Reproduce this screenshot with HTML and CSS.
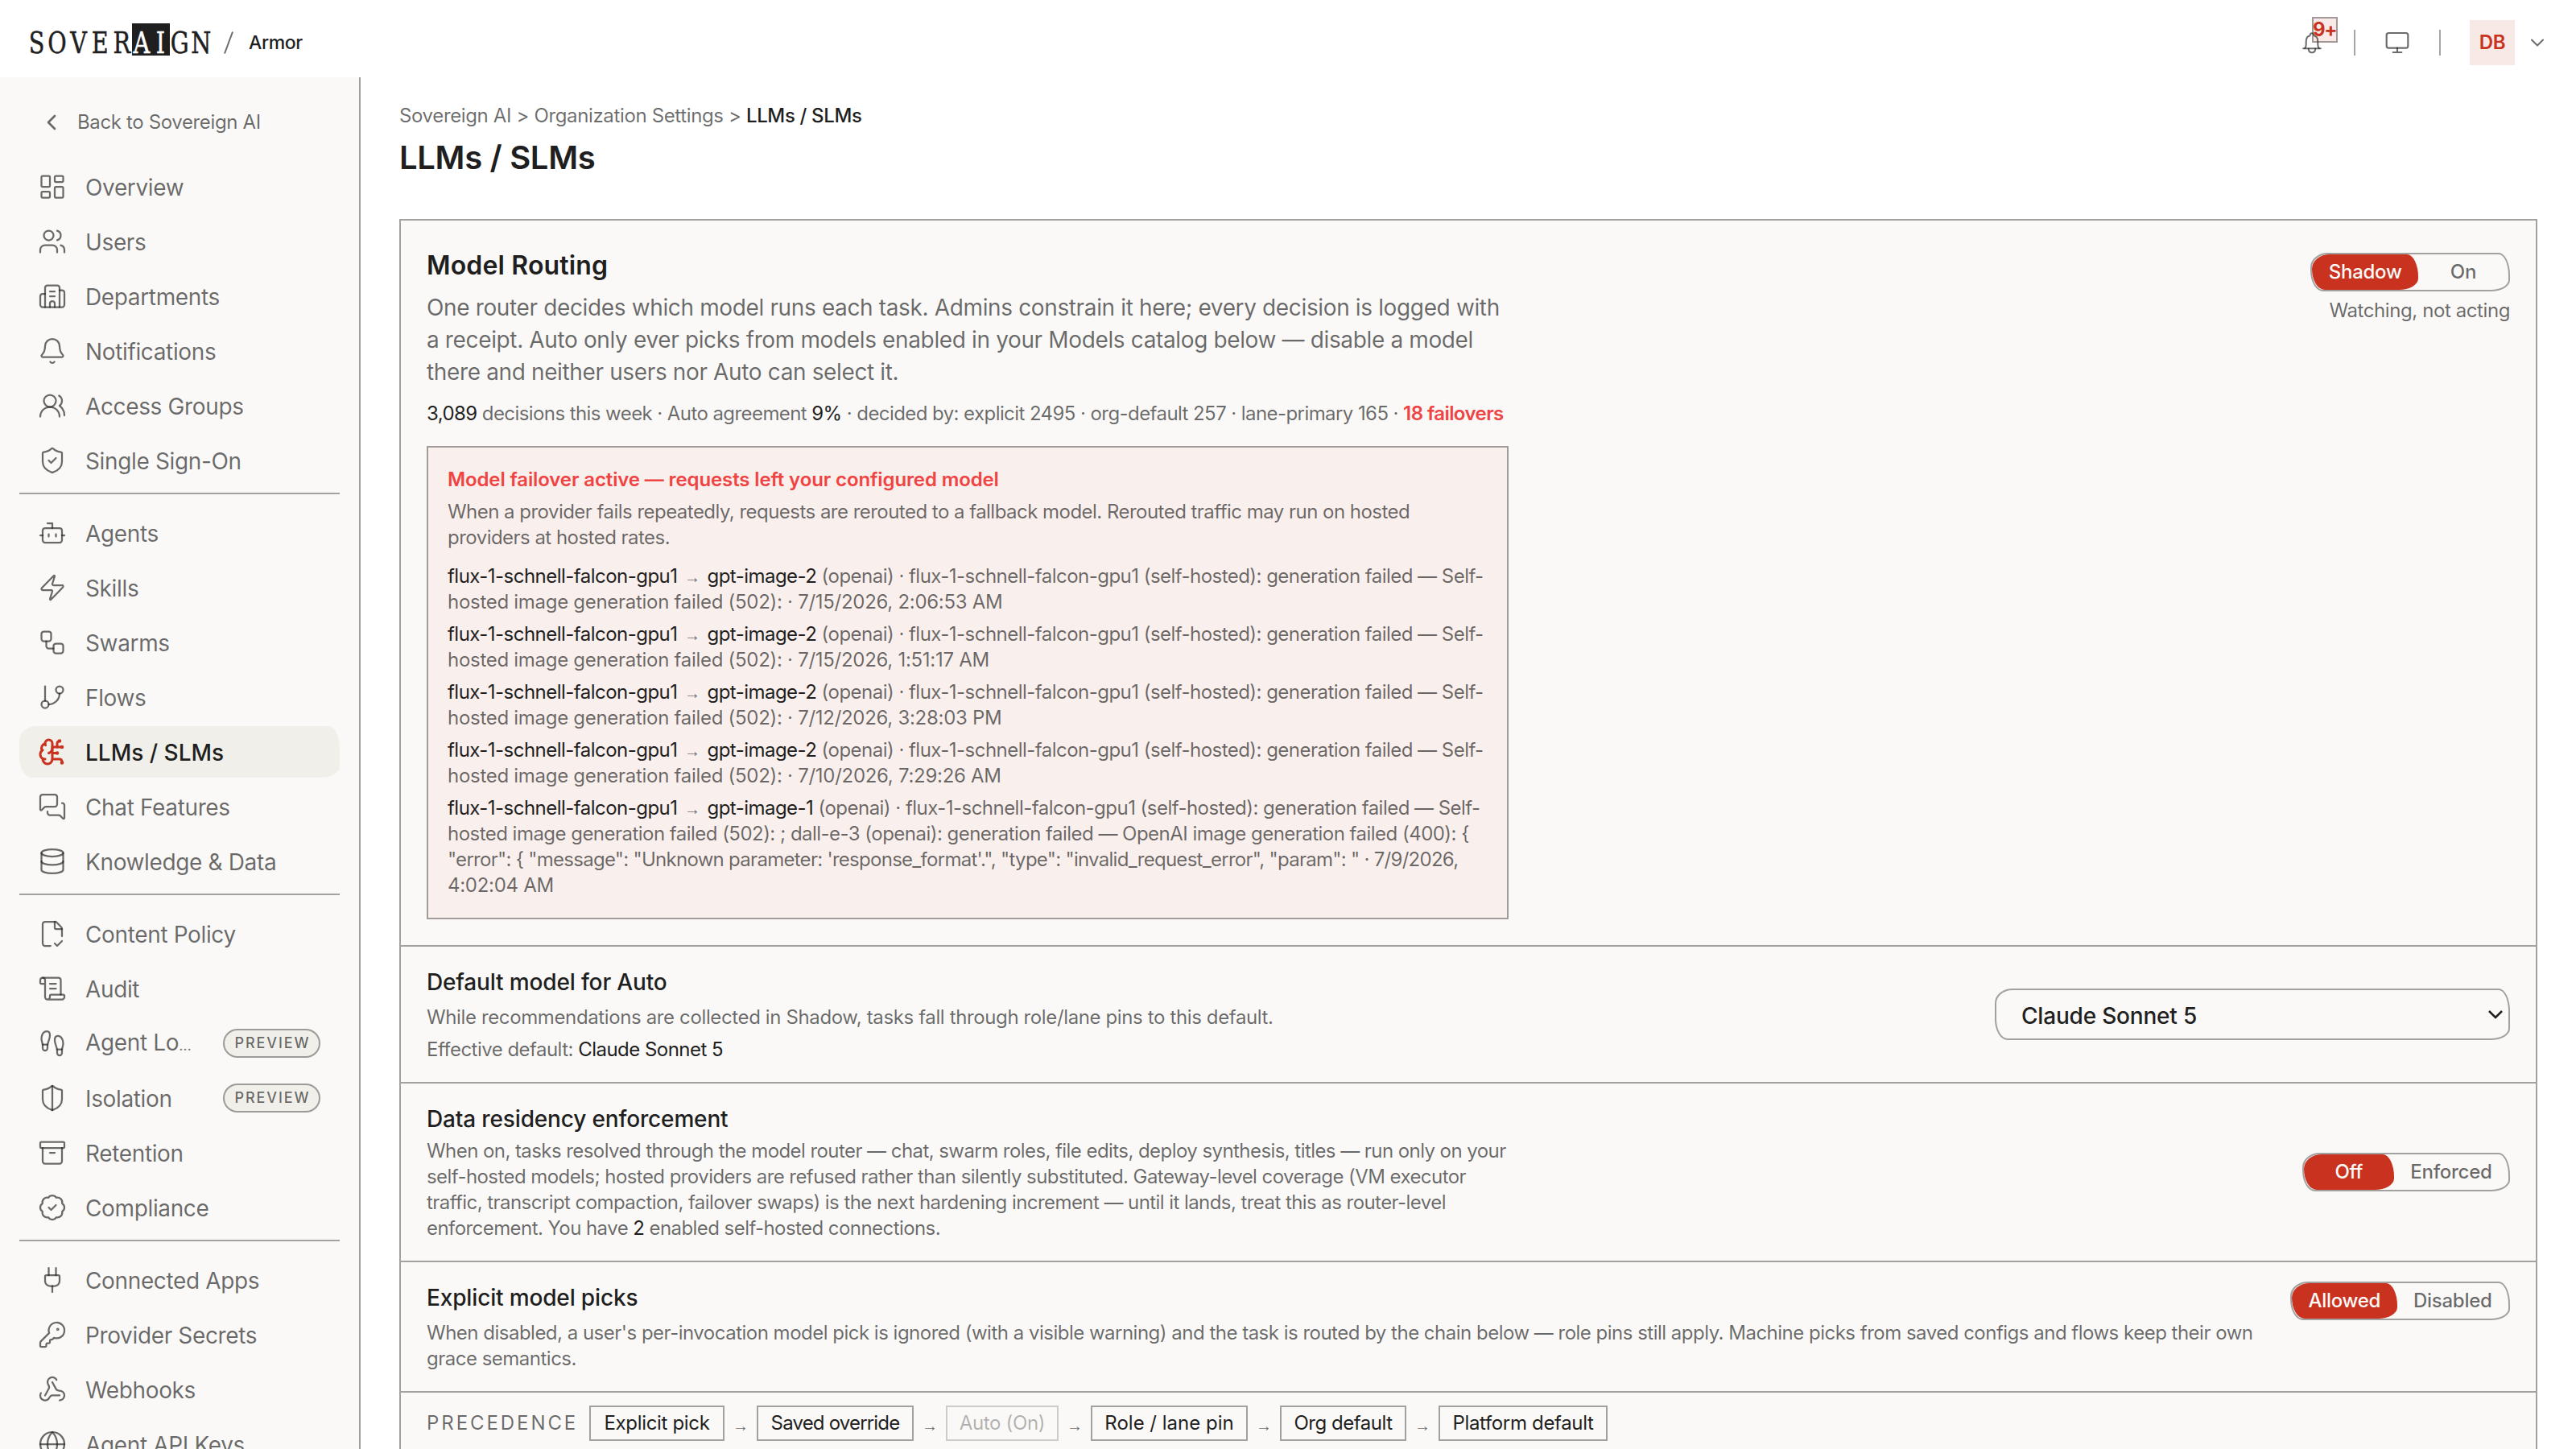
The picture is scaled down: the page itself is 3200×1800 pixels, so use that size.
FILE: index.html
```html
<!DOCTYPE html>
<html lang="en">
<head>
    <meta charset="UTF-8">
    <meta name="viewport" content="width=device-width, initial-scale=1.0">
    <title>LLMs / SLMs</title>
    <link rel="stylesheet" href="styles.css">
</head>
<body>
    <header class="topbar">
        <svg class="logo" viewBox="0 -8 232 60" role="img" aria-label="SOVERAIGN">
            <rect class="logo-box" x="132" y="2" width="47" height="40"/>
            <g transform="scale(.86 1)">
                <text class="logo-text" y="39" x="15.9 45.4 76.2 107.300 138.700">SOVER</text>
                <text class="logo-text light" y="39" x="167.400 194.800">AI</text>
                <text class="logo-text" y="39" x="222.400 253.100">GN</text>
            </g>
        </svg>
        <svg class="slash" viewBox="0 0 12 28"><path d="M1 27.5 11 .5"/></svg>
        <span class="product">Armor</span>
        <div class="topbar-right">
            <div class="bell">
                <svg class="icon" viewBox="0 0 32 32"><path d="M5.2 23.2h21.600"/><path d="M7 23c1.200-1 1.700-2.200 1.700-4.200v-4.600c0-3.600 1.900-6.200 4.800-7 .2-1.900 1-2.900 2.500-2.900s2.300 1 2.500 2.900c2.900.8 4.800 3.400 4.800 7v4.600c0 2 .5 3.200 1.700 4.200"/><path d="M11.800 23.500c0 2.900 1.700 4.800 4.200 4.800s4.200-1.900 4.200-4.800"/></svg>
                <span class="bell-count">9+</span>
            </div>
            <span class="separator"></span>
            <svg class="icon monitor" viewBox="0 0 24 24"><rect width="20" height="14" x="2" y="3" rx="2"/><path d="M8 21h8M12 17v4"/></svg>
            <span class="separator"></span>
            <div class="avatar">DB</div>
            <svg class="icon caret" viewBox="0 0 24 24"><path d="m6 9 6 6 6-6"/></svg>
        </div>
    </header>

    <div class="layout">
        <aside class="sidebar">
            <a class="back"><svg class="icon" viewBox="0 0 24 24"><path d="m15 18-6-6 6-6"/></svg>Back to Sovereign AI</a>

            <nav class="nav-group">
                <a class="nav-item"><svg class="icon" viewBox="0 0 24 24"><rect width="7" height="9" x="3" y="3" rx="1"/><rect width="7" height="5" x="14" y="3" rx="1"/><rect width="7" height="9" x="14" y="12" rx="1"/><rect width="7" height="5" x="3" y="16" rx="1"/></svg><span>Overview</span></a>
                <a class="nav-item"><svg class="icon" viewBox="0 0 24 24"><path d="M16 21v-2a4 4 0 0 0-4-4H6a4 4 0 0 0-4 4v2"/><path d="M16 3.128a4 4 0 0 1 0 7.744"/><path d="M22 21v-2a4 4 0 0 0-3-3.870"/><circle cx="9" cy="7" r="4"/></svg><span>Users</span></a>
                <a class="nav-item"><svg class="icon" viewBox="0 0 24 24"><path d="M10 12h4"/><path d="M10 8h4"/><path d="M14 21v-3a2 2 0 0 0-4 0v3"/><path d="M6 10H4a2 2 0 0 0-2 2v7a2 2 0 0 0 2 2h16a2 2 0 0 0 2-2V9a2 2 0 0 0-2-2h-2"/><path d="M6 21V5a2 2 0 0 1 2-2h8a2 2 0 0 1 2 2v16"/></svg><span>Departments</span></a>
                <a class="nav-item"><svg class="icon" viewBox="0 0 24 24"><path d="M10.268 21a2 2 0 0 0 3.464 0"/><path d="M3.262 15.326A1 1 0 0 0 4 17h16a1 1 0 0 0 .74-1.673C19.410 13.956 18 12.499 18 8A6 6 0 0 0 6 8c0 4.499-1.411 5.956-2.738 7.326"/></svg><span>Notifications</span></a>
                <a class="nav-item"><svg class="icon" viewBox="0 0 24 24"><path d="M18 21a8 8 0 0 0-16 0"/><circle cx="10" cy="8" r="5"/><path d="M22 20c0-3.370-2-6.500-4-8a5 5 0 0 0-.45-8.300"/></svg><span>Access Groups</span></a>
                <a class="nav-item"><svg class="icon" viewBox="0 0 24 24"><path d="M20 13c0 5-3.500 7.500-7.660 8.950a1 1 0 0 1-.67-.01C7.500 20.500 4 18 4 13V6a1 1 0 0 1 1-1c2 0 4.500-1.200 6.240-2.720a1.170 1.170 0 0 1 1.520 0C14.510 3.810 17 5 19 5a1 1 0 0 1 1 1z"/><path d="m9 12 2 2 4-4"/></svg><span>Single Sign-On</span></a>
            </nav>

            <nav class="nav-group">
                <a class="nav-item"><svg class="icon" viewBox="0 0 24 24"><path d="M12 8V4H8"/><rect width="16" height="12" x="4" y="8" rx="2"/><path d="M2 14h2"/><path d="M20 14h2"/><path d="M15 13v2"/><path d="M9 13v2"/></svg><span>Agents</span></a>
                <a class="nav-item"><svg class="icon" viewBox="0 0 24 24"><path d="M4 14a1 1 0 0 1-.78-1.630l9.900-10.200a.5.5 0 0 1 .86.46l-1.920 6.020A1 1 0 0 0 13 10h7a1 1 0 0 1 .78 1.630l-9.900 10.200a.5.5 0 0 1-.86-.46l1.920-6.020A1 1 0 0 0 11 14z"/></svg><span>Skills</span></a>
                <a class="nav-item"><svg class="icon" viewBox="0 0 24 24"><rect width="8" height="8" x="3" y="3" rx="2"/><path d="M7 11v4a2 2 0 0 0 2 2h4"/><rect width="8" height="8" x="13" y="13" rx="2"/></svg><span>Swarms</span></a>
                <a class="nav-item"><svg class="icon" viewBox="0 0 24 24"><path d="M6 3v12"/><circle cx="18" cy="6" r="3"/><circle cx="6" cy="18" r="3"/><path d="M18 9a9 9 0 0 1-9 9"/></svg><span>Flows</span></a>
                <a class="nav-item active"><svg class="icon" viewBox="0 0 24 24"><path d="M12 5a3 3 0 1 0-5.997.125 4 4 0 0 0-2.526 5.770 4 4 0 0 0 .556 6.588A4 4 0 1 0 12 18Z"/><path d="M9 13a4.500 4.500 0 0 0 3-4"/><path d="M6.003 5.125A3 3 0 0 0 6.401 6.500"/><path d="M3.477 10.896a4 4 0 0 1 .585-.396"/><path d="M6 18a4 4 0 0 1-1.967-.516"/><path d="M12 13h4"/><path d="M12 18h6a2 2 0 0 1 2 2v1"/><path d="M12 8h8"/><path d="M16 8V5a2 2 0 0 1 2-2"/><circle cx="16" cy="13" r=".5"/><circle cx="18" cy="3" r=".5"/><circle cx="20" cy="21" r=".5"/><circle cx="20" cy="8" r=".5"/></svg><span>LLMs / SLMs</span></a>
                <a class="nav-item"><svg class="icon" viewBox="0 0 24 24"><path d="M16 10a2 2 0 0 1-2 2H6.828a2 2 0 0 0-1.414.586l-2.202 2.202A.71.71 0 0 1 2 14.286V4a2 2 0 0 1 2-2h10a2 2 0 0 1 2 2z"/><path d="M20 9a2 2 0 0 1 2 2v10.286a.71.71 0 0 1-1.212.502l-2.202-2.202A2 2 0 0 0 17.172 19H10a2 2 0 0 1-2-2v-1"/></svg><span>Chat Features</span></a>
                <a class="nav-item"><svg class="icon" viewBox="0 0 24 24"><ellipse cx="12" cy="5" rx="9" ry="3"/><path d="M3 5V19A9 3 0 0 0 21 19V5"/><path d="M3 12A9 3 0 0 0 21 12"/></svg><span>Knowledge &amp; Data</span></a>
            </nav>

            <nav class="nav-group">
                <a class="nav-item"><svg class="icon" viewBox="0 0 24 24"><path d="M10.500 22H6a2 2 0 0 1-2-2V4a2 2 0 0 1 2-2h8a2.400 2.400 0 0 1 1.706.706l3.588 3.588A2.400 2.400 0 0 1 20 8v6"/><path d="M14 2v5a1 1 0 0 0 1 1h5"/><path d="m14 20 2 2 4-4"/></svg><span>Content Policy</span></a>
                <a class="nav-item"><svg class="icon" viewBox="0 0 24 24"><path d="M15 12h-5"/><path d="M15 8h-5"/><path d="M19 17V5a2 2 0 0 0-2-2H4"/><path d="M8 21h12a2 2 0 0 0 2-2v-1a1 1 0 0 0-1-1H11a1 1 0 0 0-1 1v1a2 2 0 1 1-4 0V5a2 2 0 1 0-4 0v2a1 1 0 0 0 1 1h3"/></svg><span>Audit</span></a>
                <a class="nav-item"><svg class="icon" viewBox="0 0 24 24"><path d="M4 16v-2.380C4 11.500 2.970 10.500 3 8c.03-2.720 1.490-6 4.500-6C9.370 2 10 3.800 10 5.500c0 3.110-2 5.660-2 8.680V16a2 2 0 1 1-4 0Z"/><path d="M20 20v-2.380c0-2.120 1.030-3.120 1-5.620-.03-2.720-1.490-6-4.500-6C14.630 6 14 7.800 14 9.500c0 3.110 2 5.660 2 8.680V20a2 2 0 1 0 4 0Z"/><path d="M16 17h4"/><path d="M4 13h4"/></svg><span>Agent Lo<small>…</small></span><em class="badge">PREVIEW</em></a>
                <a class="nav-item"><svg class="icon" viewBox="0 0 24 24"><path d="M20 13c0 5-3.500 7.500-7.660 8.950a1 1 0 0 1-.67-.01C7.500 20.500 4 18 4 13V6a1 1 0 0 1 1-1c2 0 4.500-1.200 6.240-2.720a1.170 1.170 0 0 1 1.520 0C14.510 3.810 17 5 19 5a1 1 0 0 1 1 1z"/><path d="M12 22V2"/></svg><span>Isolation</span><em class="badge">PREVIEW</em></a>
                <a class="nav-item"><svg class="icon" viewBox="0 0 24 24"><rect width="20" height="5" x="2" y="3" rx="1"/><path d="M4 8v11a2 2 0 0 0 2 2h12a2 2 0 0 0 2-2V8"/><path d="M10 12h4"/></svg><span>Retention</span></a>
                <a class="nav-item"><svg class="icon" viewBox="0 0 24 24"><path d="M3.850 8.620a4 4 0 0 1 4.780-4.770 4 4 0 0 1 6.740 0 4 4 0 0 1 4.780 4.780 4 4 0 0 1 0 6.740 4 4 0 0 1-4.770 4.780 4 4 0 0 1-6.750 0 4 4 0 0 1-4.780-4.770 4 4 0 0 1 0-6.760Z"/><path d="m9 12 2 2 4-4"/></svg><span>Compliance</span></a>
            </nav>

            <nav class="nav-group">
                <a class="nav-item"><svg class="icon" viewBox="0 0 24 24"><path d="M12 22v-5"/><path d="M15 8V2"/><path d="M17 8a1 1 0 0 1 1 1v4a4 4 0 0 1-4 4h-4a4 4 0 0 1-4-4V9a1 1 0 0 1 1-1z"/><path d="M9 8V2"/></svg><span>Connected Apps</span></a>
                <a class="nav-item"><svg class="icon" viewBox="0 0 24 24"><path d="M2.586 17.414A2 2 0 0 0 2 18.828V21a1 1 0 0 0 1 1h3a1 1 0 0 0 1-1v-1a1 1 0 0 1 1-1h1a1 1 0 0 0 1-1v-1a1 1 0 0 1 1-1h.172a2 2 0 0 0 1.414-.586l.814-.814a6.500 6.500 0 1 0-4-4z"/><circle cx="16.500" cy="7.500" r=".5"/></svg><span>Provider Secrets</span></a>
                <a class="nav-item"><svg class="icon" viewBox="0 0 24 24"><path d="M18 16.980h-5.990c-1.100 0-1.950.94-2.480 1.900A4 4 0 0 1 2 17c.01-.7.2-1.400.57-2"/><path d="m6 17 3.130-5.780c.53-.97.1-2.180-.5-3.100a4 4 0 1 1 6.890-4.060"/><path d="m12 6 3.130 5.730C15.660 12.700 16.900 13 18 13a4 4 0 0 1 0 8"/></svg><span>Webhooks</span></a>
                <a class="nav-item"><svg class="icon" viewBox="0 0 24 24"><circle cx="12" cy="12" r="10"/><path d="M12 2a14.500 14.500 0 0 0 0 20 14.500 14.500 0 0 0 0-20"/><path d="M2 12h20"/></svg><span>Agent API Keys</span></a>
            </nav>
        </aside>

        <main class="main">
            <div class="breadcrumb">Sovereign AI <i>&gt;</i> Organization Settings <i>&gt;</i> <b>LLMs / SLMs</b></div>
            <h1>LLMs / SLMs</h1>

            <div class="panel">
                <section class="routing">
                    <div class="routing-text">
                        <h2>Model Routing</h2>
                        <p class="lead">One router decides which model runs each task. Admins constrain it here; every decision is logged with<br>a receipt. Auto only ever picks from models enabled in your Models catalog below — disable a model<br>there and neither users nor Auto can select it.</p>
                        <p class="stats"><b>3,089</b> decisions this week · Auto agreement <b>9%</b> · decided by: explicit 2495 · org-default 257 · lane-primary 165 · <strong>18 failovers</strong></p>
                        <div class="alert">
                            <h4>Model failover active — requests left your configured model</h4>
                            <p>When a provider fails repeatedly, requests are rerouted to a fallback model. Rerouted traffic may run on hosted<br>providers at hosted rates.</p>
                            <ul>
                                <li><b>flux-1-schnell-falcon-gpu1</b><i class="arrow">→</i><b>gpt-image-2</b> (openai) · flux-1-schnell-falcon-gpu1 (self-hosted): generation failed — Self-<br><span>hosted image generation failed (502): · 7/15/2026, 2:06:53 AM</span></li>
                                <li><b>flux-1-schnell-falcon-gpu1</b><i class="arrow">→</i><b>gpt-image-2</b> (openai) · flux-1-schnell-falcon-gpu1 (self-hosted): generation failed — Self-<br><span>hosted image generation failed (502): · 7/15/2026, 1:51:17 AM</span></li>
                                <li><b>flux-1-schnell-falcon-gpu1</b><i class="arrow">→</i><b>gpt-image-2</b> (openai) · flux-1-schnell-falcon-gpu1 (self-hosted): generation failed — Self-<br><span>hosted image generation failed (502): · 7/12/2026, 3:28:03 PM</span></li>
                                <li><b>flux-1-schnell-falcon-gpu1</b><i class="arrow">→</i><b>gpt-image-2</b> (openai) · flux-1-schnell-falcon-gpu1 (self-hosted): generation failed — Self-<br><span>hosted image generation failed (502): · 7/10/2026, 7:29:26 AM</span></li>
                                <li><b>flux-1-schnell-falcon-gpu1</b><i class="arrow">→</i><b>gpt-image-1</b> (openai) · flux-1-schnell-falcon-gpu1 (self-hosted): generation failed — Self-<br>hosted image generation failed (502): ; dall-e-3 (openai): generation failed — OpenAI image generation failed (400): {<br><span class="json">"error": { "message": "Unknown parameter: 'response_format'.", "type": "invalid_request_error", "param": " · 7/9/2026,</span><br><span>4:02:04 AM</span></li>
                            </ul>
                        </div>
                    </div>
                    <div class="routing-mode">
                        <div class="toggle"><span class="on">Shadow</span><span>On</span></div>
                        <p>Watching, not acting</p>
                    </div>
                </section>

                <section class="setting">
                    <div>
                        <h3>Default model for Auto</h3>
                        <p class="desc loose">While recommendations are collected in Shadow, tasks fall through role/lane pins to this default.</p>
                        <p class="effective">Effective default: <b>Claude Sonnet 5</b></p>
                    </div>
                    <div class="select">Claude Sonnet 5<svg viewBox="0 0 20 12"><path d="m2 2 8 8 8-8"/></svg></div>
                </section>

                <section class="setting">
                    <div>
                        <h3>Data residency enforcement</h3>
                        <p class="desc tight">When on, tasks resolved through the model router — chat, swarm roles, file edits, deploy synthesis, titles — run only on your<br>self-hosted models; hosted providers are refused rather than silently substituted. Gateway-level coverage (VM executor<br>traffic, transcript compaction, failover swaps) is the next hardening increment — until it lands, treat this as router-level<br>enforcement. You have <b>2</b> enabled self-hosted connections.</p>
                    </div>
                    <div class="toggle"><span class="on">Off</span><span>Enforced</span></div>
                </section>

                <section class="setting top">
                    <div>
                        <h3>Explicit model picks</h3>
                        <p class="desc">When disabled, a user's per-invocation model pick is ignored (with a visible warning) and the task is routed by the chain below — role pins still apply. Machine picks from saved configs and flows keep their own<br>grace semantics.</p>
                    </div>
                    <div class="toggle"><span class="on">Allowed</span><span>Disabled</span></div>
                </section>

                <section class="precedence">
                    <span class="precedence-label">PRECEDENCE</span>
                    <span class="chip explicit">Explicit pick</span><i class="arrow">→</i>
                    <span class="chip saved">Saved override</span><i class="arrow">→</i>
                    <span class="chip muted">Auto (On)</span><i class="arrow">→</i>
                    <span class="chip role">Role / lane pin</span><i class="arrow">→</i>
                    <span class="chip org">Org default</span><i class="arrow">→</i>
                    <span class="chip platform">Platform default</span>
                </section>
            </div>
        </main>
    </div>
</body>
</html>
```
FILE: styles.css
```css
:root {
    --ink: #1f1f1f;
    --muted: rgba(31, 31, 31, 0.66);
    --line: rgba(31, 31, 31, 0.4);
    --surface: #faf9f7;
    --red: #c8321e;
    --danger: #ef4444;
    --wobble: 22px 14px 24px 16px / 18px 28px 14px 26px;
}
* {
    box-sizing: border-box;
}
body {
    margin: 0;
    height: 1800px;
    overflow: hidden;
    background: #fff;
    color: var(--muted);
    font-family: Inter, "Liberation Sans", sans-serif;
    font-size: 24px;
    line-height: 32px;
    letter-spacing: -0.015em;
}
h1, h2, h3, h4, p, ul {
    margin: 0;
    padding: 0;
    color: var(--ink);
}
p, ul {
    color: var(--muted);
}
b {
    font-weight: 400;
    color: var(--ink);
}
i, em {
    font-style: normal;
}
.icon {
    flex: none;
    width: 32px;
    height: 32px;
    fill: none;
    stroke: var(--muted);
    stroke-width: 2;
    stroke-linecap: round;
    stroke-linejoin: round;
}

/* top bar */
.topbar {
    display: flex;
    align-items: center;
    height: 96px;
    padding: 10px 34px 0 32px;
}
.logo {
    width: 232px;
    height: 60px;
    margin-top: -8px;
    overflow: visible;
}
.logo-box {
    fill: var(--ink);
}
.logo-text {
    font-family: "DejaVu Serif Condensed", "DejaVu Serif", serif;
    font-size: 37px;
    letter-spacing: 0;
    text-anchor: middle;
    fill: var(--ink);
    stroke: var(--ink);
    stroke-width: 0.5;
}
.logo-text.light {
    fill: #fff;
    stroke: #fff;
}
.slash {
    width: 12px;
    height: 28px;
    margin: 0 19px 0 14px;
    fill: none;
    stroke: var(--muted);
    stroke-width: 2;
}
.product {
    color: var(--ink);
    font-size: 23px;
    font-weight: 500;
}
.topbar-right {
    display: flex;
    align-items: center;
    margin-left: auto;
}
.bell {
    position: relative;
    height: 32px;
}
.bell-count {
    position: absolute;
    left: 16px;
    top: -16px;
    width: 32px;
    height: 32px;
    border: 2px solid var(--line);
    background: rgba(200, 50, 30, 0.1);
    color: var(--red);
    font-weight: 700;
    line-height: 28px;
    text-align: center;
    letter-spacing: -0.06em;
    text-indent: -1px;
}
.separator {
    width: 2px;
    height: 32px;
    margin: 0 36px;
    background: var(--line);
}
.monitor {
    stroke-width: 1.6;
}
.avatar {
    width: 56px;
    height: 56px;
    margin-right: 14px;
    background: #f9e9e6;
    color: var(--red);
    font-weight: 600;
    line-height: 56px;
    text-align: center;
}
.caret {
    width: 28px;
    height: 28px;
    stroke-width: 1.7;
}

/* sidebar */
.layout {
    display: flex;
    height: 1704px;
}
.sidebar {
    flex: none;
    width: 448px;
    padding: 24px 24px 0;
    border-right: 2px solid var(--line);
    background: var(--surface);
    overflow: hidden;
}
.back {
    display: flex;
    align-items: center;
    gap: 16px;
    height: 64px;
    margin-bottom: 16px;
    padding-left: 24px;
}
.nav-group {
    display: flex;
    flex-direction: column;
    gap: 4px;
}
.nav-group + .nav-group {
    margin-top: 8px;
    padding-top: 16px;
    border-top: 2px solid var(--line);
}
.nav-item {
    display: flex;
    align-items: center;
    height: 64px;
    flex: none;
    padding: 0 24px 0 23px;
    gap: 23px;
    font-size: 28px;
    white-space: nowrap;
}
.nav-item span {
    padding-top: 1px;
}
.nav-item small {
    font-size: 18px;
}
.nav-item .icon {
    width: 36px;
    height: 36px;
    stroke-width: 1.5;
}
.nav-item.active {
    border-radius: var(--wobble);
    background: #f0efea;
    color: var(--ink);
    font-weight: 500;
    letter-spacing: 0;
}
.nav-item.active .icon {
    stroke: var(--red);
    stroke-width: 2;
}
.badge {
    width: 121px;
    height: 36px;
    margin-left: auto;
    border: 2px solid var(--line);
    border-radius: 18px;
    background: #f0efea;
    font-size: 18px;
    font-weight: 500;
    line-height: 32px;
    letter-spacing: 0.105em;
    text-indent: 0.105em;
    text-align: center;
}

/* page */
.main {
    flex: 1;
    padding: 32px 48px 0;
}
.breadcrumb {
    letter-spacing: -0.015em;
}
.breadcrumb b {
    font-weight: 500;
}
h1 {
    height: 112px;
    padding-top: 12px;
    font-size: 40px;
    font-weight: 600;
    line-height: 48px;
    letter-spacing: -0.008em;
}
.panel {
    border: 2px solid var(--line);
    background: var(--surface);
    white-space: nowrap;
}
.panel section + section {
    border-top: 2px solid var(--line);
}
.routing {
    display: flex;
    justify-content: space-between;
    padding: 32px;
}
.routing-text {
    width: 1344px;
}
h2 {
    margin-bottom: 8px;
    font-size: 32px;
    font-weight: 600;
    line-height: 48px;
    letter-spacing: 0.005em;
}
.lead {
    margin-bottom: 16px;
    font-size: 28px;
    line-height: 40px;
    letter-spacing: -0.013em;
}
.stats {
    margin-bottom: 24px;
    letter-spacing: -0.024em;
}
.stats strong {
    color: var(--danger);
    font-weight: 600;
}
.alert {
    padding: 24px;
    border: 2px solid var(--line);
    background: #f9efec;
    letter-spacing: -0.022em;
}
.alert h4 {
    margin-bottom: 8px;
    color: var(--danger);
    font-size: 24px;
    font-weight: 600;
    letter-spacing: -0.005em;
}
.alert ul {
    display: grid;
    gap: 8px;
    margin-top: 16px;
    list-style: none;
}
.alert li span {
    letter-spacing: -0.012em;
}
.alert li .json {
    letter-spacing: -0.03em;
}
.arrow {
    display: inline-block;
    width: 37px;
    font-family: "Liberation Sans", Arial, sans-serif;
    font-size: 20px;
    line-height: 20px;
    letter-spacing: 0;
    text-align: center;
}
.routing-mode {
    display: flex;
    flex-direction: column;
    align-items: flex-end;
    gap: 8px;
    padding-top: 8px;
    letter-spacing: -0.017em;
}
.toggle {
    display: flex;
    flex: none;
    height: 48px;
    border: 2px solid var(--line);
    border-radius: var(--wobble);
    font-weight: 500;
    line-height: 44px;
    letter-spacing: -0.012em;
}
.toggle span {
    min-width: 112px;
    padding: 0 20.5px;
    text-align: center;
}
.toggle .on {
    border-radius: var(--wobble);
    background: var(--red);
    color: var(--surface);
}
.setting {
    display: flex;
    align-items: center;
    justify-content: space-between;
    padding: 24px 32px;
}
.setting.top {
    align-items: flex-start;
}
h3 {
    font-size: 28px;
    font-weight: 500;
    line-height: 40px;
    letter-spacing: -0.0055em;
}
.desc {
    margin-top: 8px;
    letter-spacing: -0.021em;
}
.desc.loose {
    letter-spacing: -0.0156em;
}
.desc.tight {
    margin-top: 4px;
    letter-spacing: -0.0235em;
}
.effective {
    margin-top: 8px;
    letter-spacing: -0.022em;
}
.select {
    display: flex;
    align-items: center;
    justify-content: space-between;
    width: 640px;
    height: 64px;
    padding: 3px 6px 0 31px;
    border: 2px solid var(--line);
    border-radius: var(--wobble);
    color: var(--ink);
    font-size: 28px;
    font-weight: 500;
    letter-spacing: -0.007em;
}
.select svg {
    width: 20px;
    height: 12px;
    margin-top: -3px;
    fill: none;
    stroke: var(--ink);
    stroke-width: 2.5;
}
.precedence {
    display: flex;
    align-items: center;
    padding: 16px 32px;
}
.precedence-label {
    width: 202px;
    letter-spacing: 0.122em;
}
.chip {
    width: 140px;
    height: 44px;
    border: 2px solid var(--line);
    color: var(--ink);
    line-height: 40px;
    letter-spacing: -0.014em;
    text-align: center;
}
.chip.explicit {
    width: 168px;
}
.chip.saved {
    width: 195px;
    letter-spacing: -0.034em;
}
.chip.role {
    width: 195px;
    letter-spacing: 0;
}
.chip.org {
    width: 157px;
    letter-spacing: -0.02em;
}
.chip.platform {
    width: 210px;
}
.chip.muted {
    opacity: 0.5;
    color: var(--muted);
}
.precedence .arrow {
    width: 40px;
    padding-top: 6px;
}
```
